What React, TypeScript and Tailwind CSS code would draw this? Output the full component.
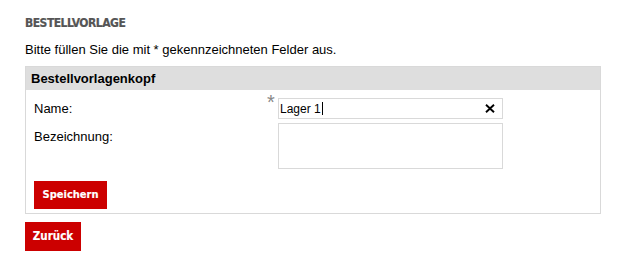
export default function App() {
  return (
    <div className="min-h-screen bg-white pl-[25px] pt-[17px] font-['Liberation_Sans',Arial,sans-serif] text-black">
      <div className="w-[576px]">
        {/* Title */}
        <h1 className="text-[12px] leading-[12px] font-bold uppercase text-[#555] font-['DejaVu_Sans_Condensed','DejaVu_Sans',sans-serif] [font-stretch:condensed] tracking-[-0.5px] [-webkit-text-stroke:0.2px_#555]">
          Bestellvorlage
        </h1>
        <p className="mt-[13px] text-[13px] leading-[15px]">
          Bitte füllen Sie die mit * gekennzeichneten Felder aus.
        </p>

        {/* Panel */}
        <div className="mt-[9px] border border-[#d9d9d9]">
          <div className="h-[23px] bg-[#dedede] pl-[5px] text-[13px] font-bold leading-[23px]">
            Bestellvorlagenkopf
          </div>
          <div className="pl-[8px] pt-[8px] pb-[4px]">
            <div className="flex items-center">
              <label className="w-[233px] text-[13px]">Name:</label>
              <span className="w-[11px] self-start -translate-y-[3px] text-[20px] leading-[14px] text-[#888]">*</span>
              <div className="flex h-[21px] w-[225px] items-center border border-[#d9d9d9] pl-[1px] pr-[7px]">
                <span className="flex-1 text-[12px]">
                  Lager 1<span className="ml-[1px] inline-block h-[13px] w-[1px] translate-y-[2px] bg-black" />
                </span>
                <svg width="10" height="9" viewBox="0 0 10 9" className="text-black">
                  <path d="M1 0.8L9 8.2M9 0.8L1 8.2" stroke="currentColor" strokeWidth="1.9" />
                </svg>
              </div>
            </div>
            <div className="mt-[4px] flex items-start">
              <label className="mt-[4px] w-[244px] text-[13px]">Bezeichnung:</label>
              <div className="h-[46px] w-[225px] border border-[#d9d9d9]" />
            </div>
            <button className="mt-[12px] h-[28px] w-[73px] bg-[#cc0000] text-[11px] font-bold text-white font-['DejaVu_Sans_Condensed','DejaVu_Sans',sans-serif] [font-stretch:condensed] [-webkit-text-stroke:0.15px_white]">
              Speichern
            </button>
          </div>
        </div>

        <button className="mt-[8px] h-[29px] w-[56px] bg-[#cc0000] text-[11.5px] font-bold text-white font-['DejaVu_Sans_Condensed','DejaVu_Sans',sans-serif] [font-stretch:condensed] [-webkit-text-stroke:0.15px_white]">
          Zurück
        </button>
      </div>
    </div>
  )
}
